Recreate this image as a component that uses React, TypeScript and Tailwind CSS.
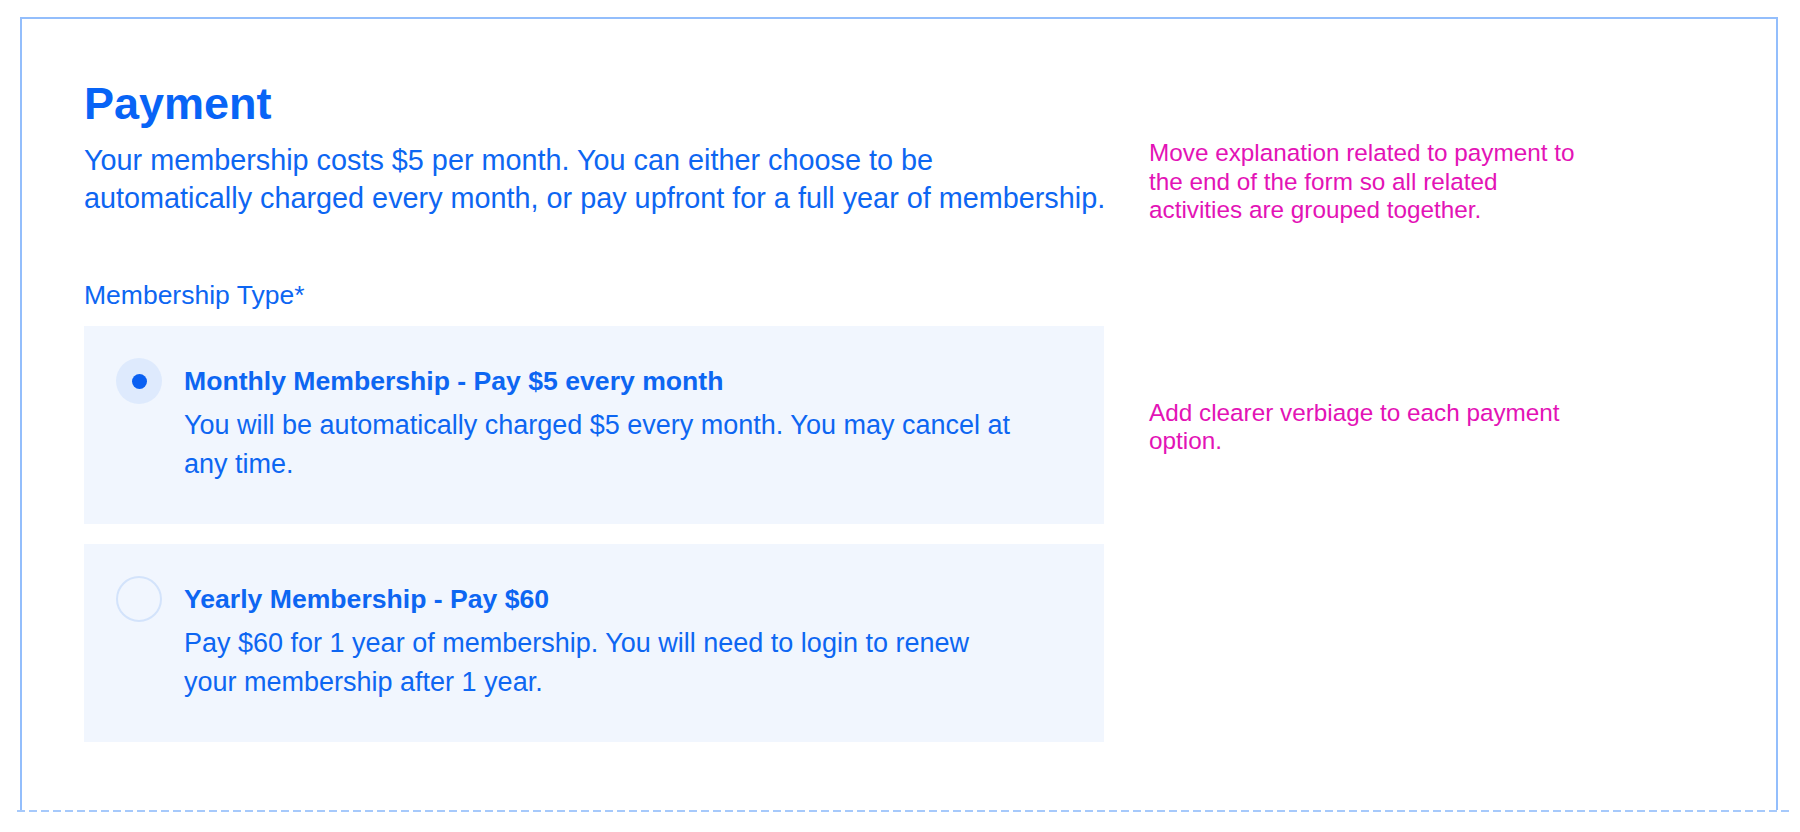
import React from 'react'

const options = [
  {
    id: 'monthly',
    title: 'Monthly Membership - Pay $5 every month',
    lines: ['You will be automatically charged $5 every month. You may cancel at', 'any time.'],
    checked: true,
  },
  {
    id: 'yearly',
    title: 'Yearly Membership - Pay $60',
    lines: ['Pay $60 for 1 year of membership. You will need to login to renew', 'your membership after 1 year.'],
    checked: false,
  },
]

const Radio = ({ checked }: { checked: boolean }) =>
  checked ? (
    <div className="flex h-[46px] w-[46px] shrink-0 items-center justify-center rounded-full bg-[#deeafd]">
      <div className="h-[15px] w-[15px] rounded-full bg-[#0a60f2]"></div>
    </div>
  ) : (
    <div className="h-[46px] w-[46px] shrink-0 rounded-full border-[2.5px] border-[#d3e3fb] bg-[#f1f6fe]"></div>
  )

const App = () => {
  return (
    <div className="min-h-screen bg-white font-['Liberation_Sans',Arial,sans-serif] text-[#0d66f2]">
      <div className="pl-[20px] pr-[22px] pt-[17px]">
        <div className="flex h-[793px] border-x-2 border-t-2 border-[#93befc] pl-[62px] pt-[62px]">
          <div className="w-[1020px] shrink-0">
            <h1 className="text-[45px] font-bold leading-[45px] text-[#0864f6]">Payment</h1>
            <p className="mt-[15px] w-[1045px] whitespace-nowrap text-[28.8px] leading-[38px]">
              Your membership costs $5 per month. You can either choose to be
              <br />
              automatically charged every month, or pay upfront for a full year of membership.
            </p>
            <div className="mt-[62px] text-[26.5px] leading-[32px]">Membership Type*</div>
            <div className="mt-[15px] flex flex-col gap-[20px]">
              {options.map((opt) => (
                <div key={opt.id} className="flex bg-[#f1f6fe] pl-[32px] pt-[32px] pb-[40px]">
                  <Radio checked={opt.checked} />
                  <div className="ml-[22px] mt-[7px]">
                    <div className="text-[26.6px] font-bold leading-[32px]">{opt.title}</div>
                    <div className="mt-[9px] whitespace-nowrap text-[27px] leading-[39px]">
                      {opt.lines.map((l) => (
                        <div key={l}>{l}</div>
                      ))}
                    </div>
                  </div>
                </div>
              ))}
            </div>
          </div>
          <div className="ml-[45px] w-[440px] text-[24.3px] leading-[28.5px] text-[#e313b6]">
            <p className="mt-[58px]">
              Move explanation related to payment to the end of the form so all related activities are grouped together.
            </p>
            <p className="mt-[174px]">Add clearer verbiage to each payment option.</p>
          </div>
        </div>
        <div className="-ml-[3px] -mr-[11px] h-[2px] bg-[repeating-linear-gradient(to_right,#a6c9fb_0_8px,transparent_8px_12px)]"></div>
      </div>
    </div>
  )
}

export default App
